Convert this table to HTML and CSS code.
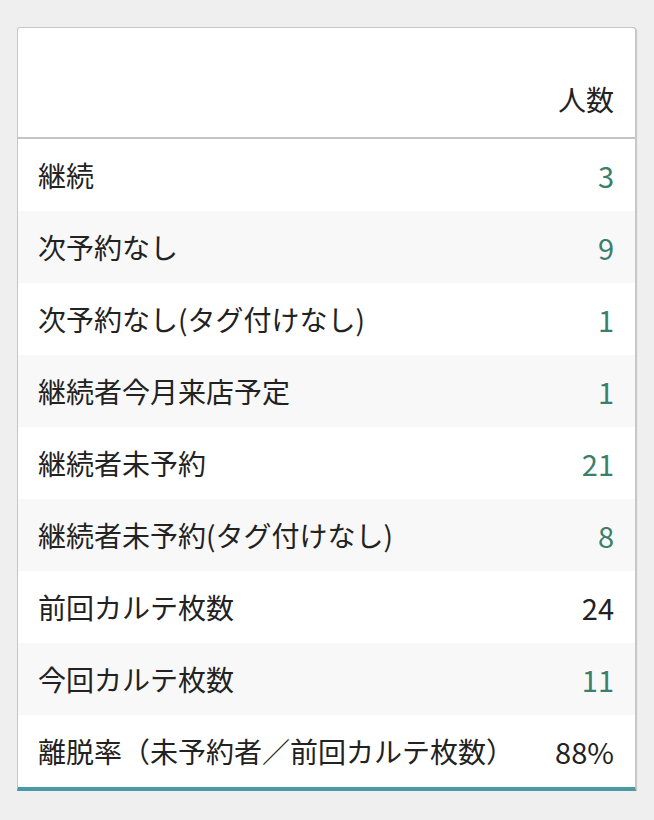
FILE: index.html
```html
<!DOCTYPE html>
<html lang="ja">
<head>
<meta charset="utf-8">
<title>人数</title>
<link rel="stylesheet" href="styles.css">
</head>
<body>
<div class="card">
  <div class="head"><span class="head-label">人数</span></div>
  <div class="row"><span class="label">継続</span><span class="num green">3</span></div>
  <div class="row alt"><span class="label">次予約なし</span><span class="num green">9</span></div>
  <div class="row"><span class="label">次予約なし(タグ付けなし)</span><span class="num green">1</span></div>
  <div class="row alt"><span class="label">継続者今月来店予定</span><span class="num green">1</span></div>
  <div class="row"><span class="label">継続者未予約</span><span class="num green">21</span></div>
  <div class="row alt"><span class="label">継続者未予約(タグ付けなし)</span><span class="num green">8</span></div>
  <div class="row"><span class="label">前回カルテ枚数</span><span class="num">24</span></div>
  <div class="row alt"><span class="label">今回カルテ枚数</span><span class="num green">11</span></div>
  <div class="row"><span class="label">離脱率（未予約者／前回カルテ枚数）</span><span class="num">88%</span></div>
</div>
</body>
</html>
```
FILE: styles.css
```css
html, body {
  margin: 0;
  padding: 0;
  background: #efefef;
}
body {
  font-family: "Noto Sans CJK JP", "Noto Sans", sans-serif;
  color: #222;
  font-size: 28px;
}
.card {
  margin: 27px 0 0 17px;
  width: 617px;
  background: #fff;
  border: 1px solid #c6c6c6;
  border-bottom: 4px solid #4a9aa4;
  border-radius: 3px 3px 0 0;
  box-shadow: 1px 1px 1px rgba(0,0,0,0.18);
}
.head {
  height: 111px;
  box-sizing: border-box;
  border-bottom: 2px solid #c4c4c4;
  display: flex;
  justify-content: flex-end;
  align-items: flex-end;
  padding: 0 21px 18px 20px;
}
.head-label {
  line-height: 40px;
}
.row {
  height: 72px;
  display: flex;
  align-items: center;
  justify-content: space-between;
  padding: 0 21px 0 20px;
  background: #fff;
}
.row.alt {
  background: #f8f8f8;
}
.label, .num {
  line-height: 40px;
  white-space: nowrap;
}
.num {
  font-size: 29px;
}
.num.green {
  color: #3b7f6b;
}
```
